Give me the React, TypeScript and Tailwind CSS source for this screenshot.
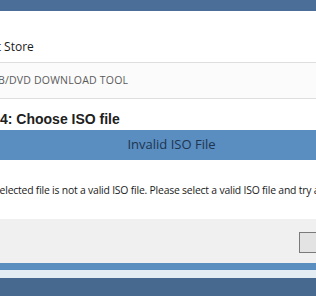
import React from 'react'

const seg = { fontFamily: '"Open Sans", "Noto Sans", sans-serif' }

export default function App() {
  return (
    <div className="relative h-[296px] w-[316px] overflow-hidden bg-white">
      {/* ventana de fondo */}
      <div className="h-[11px] bg-[#4a6e98]" />

      <div className="flex h-[51px] items-end pb-[6px] whitespace-nowrap" style={seg}>
        <span className="-ml-[52px] text-[12px] text-[#1a1a1a]">Microsoft Store</span>
      </div>

      <div className="flex h-[37px] items-center border-y border-[#dedede] bg-[#fbfbfb] whitespace-nowrap" style={seg}>
        <span className="-ml-[72px] text-[10.5px] tracking-[0.2px] text-[#5a5a5a]">WINDOWS USB/DVD DOWNLOAD TOOL</span>
      </div>

      <div className="flex h-[31px] items-center pt-[10px] whitespace-nowrap">
        <span
          className="text-[14px] font-bold text-[#202020]"
          style={{ fontFamily: '"Liberation Sans", Arial, sans-serif' }}
        >
          4: Choose ISO file
        </span>
      </div>

      {/* diálogo */}
      <div className="flex h-[30px] items-center justify-center bg-[#5a8dc0] pl-[27px]" style={seg}>
        <span className="text-[13px] text-[#1d3550]">Invalid ISO File</span>
      </div>

      <div className="flex h-[59px] items-center pt-[3px] whitespace-pre" style={seg}>
        <span className="-ml-[25px] text-[10.4px] tracking-[-0.2px] text-[#1a1a1a]">
          The selected file is not a valid ISO file. Please select a valid ISO file and try again.
        </span>
      </div>

      <div className="flex h-[44px] items-start justify-end bg-[#f0f0f0] pt-[13px]">
        <button className="-mr-[58px] h-[21px] w-[75px] shrink-0 border border-[#7a7a7a] bg-[#e3e3e3]" />
      </div>

      <div className="h-[7px] bg-[#5a8dc0]" />
      <div className="h-[8px] bg-[#e4ecf4]" />
      <div className="h-[18px] bg-[#48698f]" />
    </div>
  )
}
